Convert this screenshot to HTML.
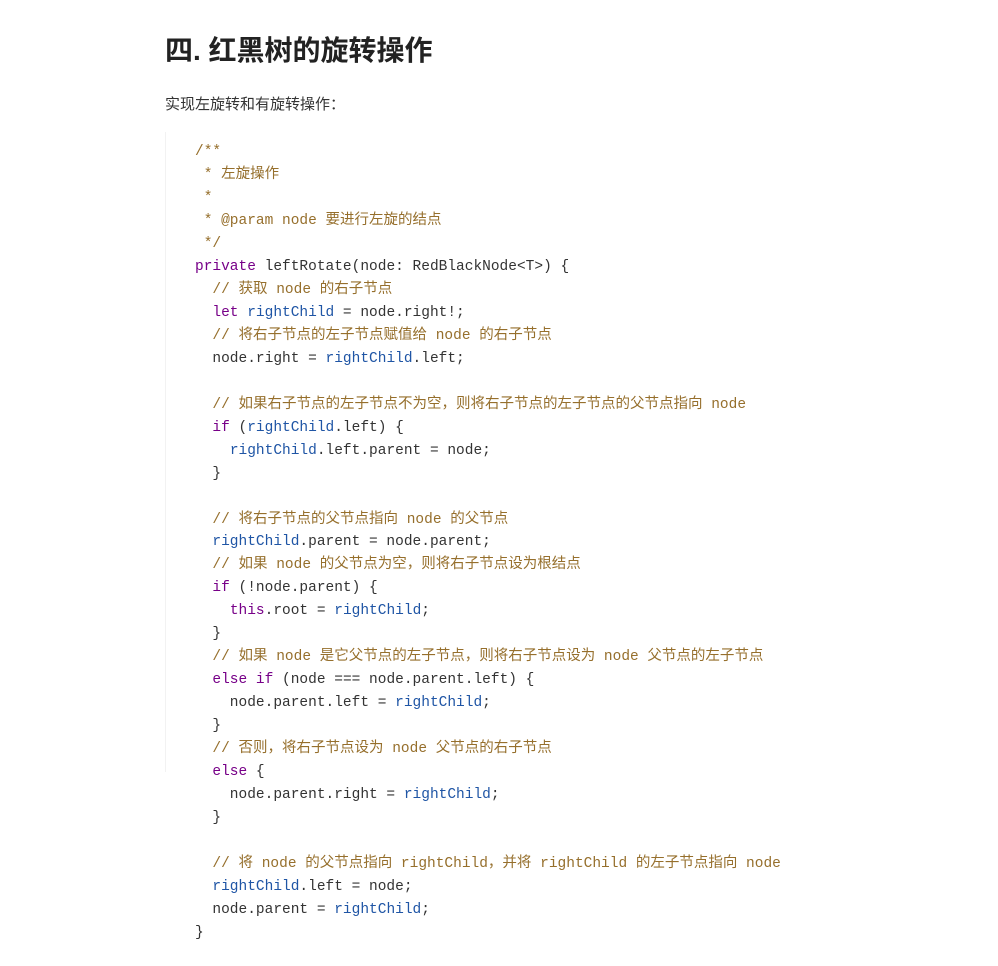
<!DOCTYPE html>
<html><head><meta charset="utf-8"><style>
body{margin:0;background:#fff;width:998px;height:966px;overflow:hidden;font-family:"Liberation Sans","Noto Sans CJK SC",sans-serif;color:#333}
h1{position:absolute;left:165px;top:31px;margin:0;font-size:28px;line-height:40px;font-weight:bold;color:#222;font-family:"Liberation Sans","Noto Sans CJK SC",sans-serif}
p{position:absolute;left:165px;top:94px;margin:0;font-size:15px;line-height:22px;color:#333}
.bar{position:absolute;left:165px;top:132px;width:1px;height:640px;background:#f2f2f2}
pre{position:absolute;left:195px;top:141px;margin:0;font-family:"Liberation Mono","Noto Sans CJK SC",monospace;font-size:14.5px;line-height:22.97px;color:#333}
.c{color:#966f2c}.k{color:#770088}.v{color:#1f55a5}
</style></head><body>
<h1>四. 红黑树的旋转操作</h1>
<p>实现左旋转和有旋转操作：</p>
<div class="bar"></div>
<pre><span class="c">/**
 * 左旋操作
 *
 * @param node 要进行左旋的结点
 */</span>
<span class="k">private</span> leftRotate(node: RedBlackNode&lt;T&gt;) {
  <span class="c">// 获取 node 的右子节点</span>
  <span class="k">let</span> <span class="v">rightChild</span> = node.right!;
  <span class="c">// 将右子节点的左子节点赋值给 node 的右子节点</span>
  node.right = <span class="v">rightChild</span>.left;

  <span class="c">// 如果右子节点的左子节点不为空，则将右子节点的左子节点的父节点指向 node</span>
  <span class="k">if</span> (<span class="v">rightChild</span>.left) {
    <span class="v">rightChild</span>.left.parent = node;
  }

  <span class="c">// 将右子节点的父节点指向 node 的父节点</span>
  <span class="v">rightChild</span>.parent = node.parent;
  <span class="c">// 如果 node 的父节点为空，则将右子节点设为根结点</span>
  <span class="k">if</span> (!node.parent) {
    <span class="k">this</span>.root = <span class="v">rightChild</span>;
  }
  <span class="c">// 如果 node 是它父节点的左子节点，则将右子节点设为 node 父节点的左子节点</span>
  <span class="k">else</span> <span class="k">if</span> (node === node.parent.left) {
    node.parent.left = <span class="v">rightChild</span>;
  }
  <span class="c">// 否则，将右子节点设为 node 父节点的右子节点</span>
  <span class="k">else</span> {
    node.parent.right = <span class="v">rightChild</span>;
  }

  <span class="c">// 将 node 的父节点指向 rightChild，并将 rightChild 的左子节点指向 node</span>
  <span class="v">rightChild</span>.left = node;
  node.parent = <span class="v">rightChild</span>;
}</pre>
</body></html>
